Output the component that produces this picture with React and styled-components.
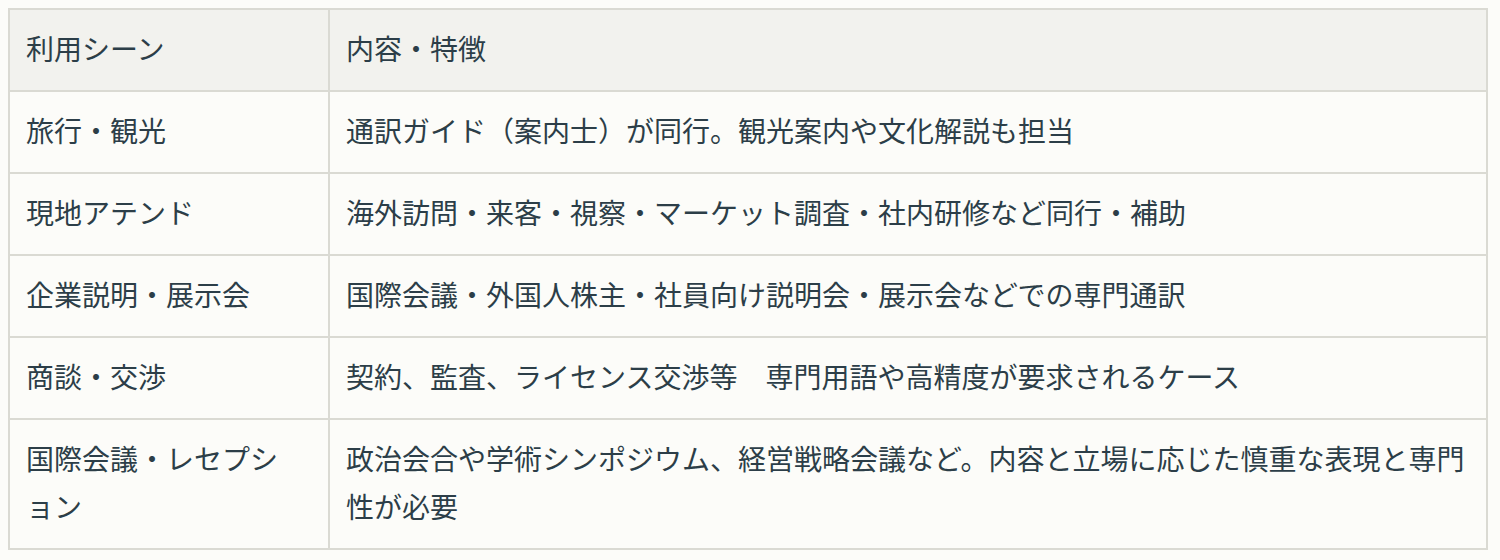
import React from "react";
import styled, { createGlobalStyle } from "styled-components";

const GlobalStyle = createGlobalStyle`
	body {
		margin: 8px;
		background: #fcfcf9;
		font-family: "Noto Sans CJK JP", "Noto Sans", sans-serif;
		color: #2c3e48;
	}
`;

// --------------------------------------------------

const rows = [
	[ "旅行・観光", "通訳ガイド（案内士）が同行。観光案内や文化解説も担当", ],
	[ "現地アテンド", "海外訪問・来客・視察・マーケット調査・社内研修など同行・補助", ],
	[ "企業説明・展示会", "国際会議・外国人株主・社員向け説明会・展示会などでの専門通訳", ],
	[ "商談・交渉", "契約、監査、ライセンス交渉等　専門用語や高精度が要求されるケース", ],
	[ "国際会議・レセプション", "政治会合や学術シンポジウム、経営戦略会議など。内容と立場に応じた慎重な表現と専門性が必要", ],
];

const Table = styled.table`
	width: 1480px;
	table-layout: fixed;
	border-collapse: separate;
	border-spacing: 0;
	border-top: 2px solid #dadad3;
	border-left: 2px solid #dadad3;
	font-size: 28px;
	line-height: 48px;
	line-break: normal;
`;

const Cell = styled.td`
	box-sizing: border-box;
	padding: 14px ${ p => (p.first ? "24px" : "16px") } 18px 16px;
	width: ${ p => (p.first ? "320px" : "auto") };
	text-align: left;
	vertical-align: top;
	font-weight: 400;
	border-right: 2px solid #dadad3;
	border-bottom: 2px solid #dadad3;
	background: ${ p => (p.head ? "#f2f2ee" : "#fcfcf9") };
`;

export default function App() {
	return (
		<>
			<GlobalStyle />
			<Table lang = "ja">
				<thead>
					<tr>
						<Cell as = "th" head first>利用シーン</Cell>
						<Cell as = "th" head>内容・特徴</Cell>
					</tr>
				</thead>
				<tbody>
					{rows.map(([ scene, detail, ]) => (
						<tr key = { scene }>
							<Cell first>{scene}</Cell>
							<Cell>{detail}</Cell>
						</tr>
					))}
				</tbody>
			</Table>
		</>
	);
}
